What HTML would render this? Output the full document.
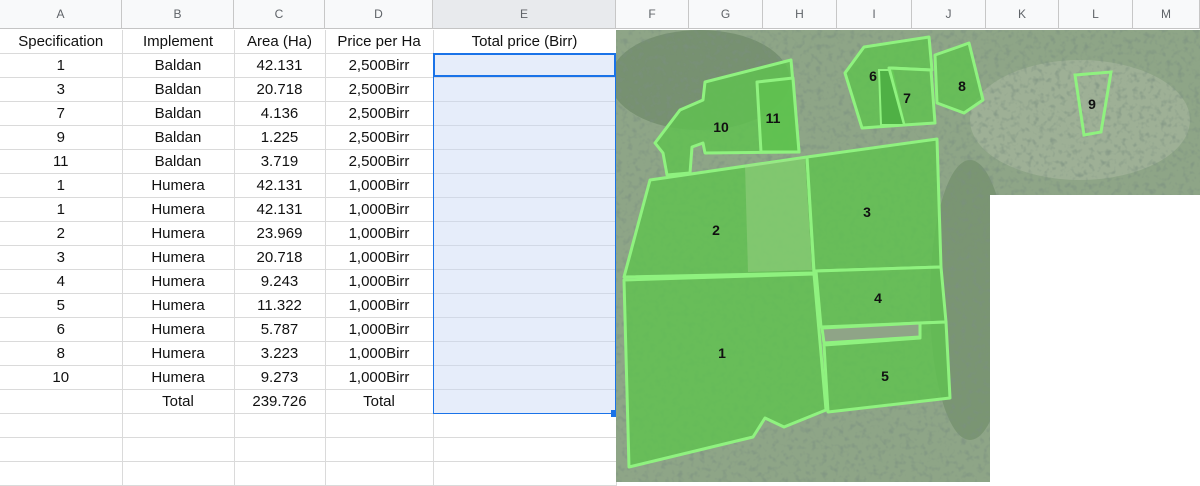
<!DOCTYPE html>
<html><head><style>
body{margin:0;width:1200px;height:486px;overflow:hidden;background:#fff;font-family:"Liberation Sans",Arial,sans-serif;position:relative}
.hdr{position:absolute;top:0;height:29px;border-right:1px solid #c7c7c7;border-bottom:1px solid #c4c4c4;background:#f8f9fa;color:#5f6368;font-size:12px;text-align:center;line-height:29px;box-sizing:border-box}
.grid{position:absolute;left:0;top:30px}
table{border-collapse:collapse;table-layout:fixed}
td{height:23px;border-right:1px solid #dadada;border-bottom:1px solid #dadada;text-align:center;font-size:15px;color:#111;padding:0;line-height:23px;white-space:nowrap;overflow:hidden}
</style></head><body>
<div class="hdr" style="left:0;width:122px">A</div>
<div class="hdr" style="left:122px;width:112px">B</div>
<div class="hdr" style="left:234px;width:91px">C</div>
<div class="hdr" style="left:325px;width:108px">D</div>
<div class="hdr" style="left:433px;width:183px;background:#e8eaed">E</div>
<div class="hdr" style="left:616px;width:73px">F</div>
<div class="hdr" style="left:689px;width:74px">G</div>
<div class="hdr" style="left:763px;width:74px">H</div>
<div class="hdr" style="left:837px;width:75px">I</div>
<div class="hdr" style="left:912px;width:74px">J</div>
<div class="hdr" style="left:986px;width:73px">K</div>
<div class="hdr" style="left:1059px;width:74px">L</div>
<div class="hdr" style="left:1133px;width:67px">M</div>
<div class="grid"><table>
<colgroup><col style="width:122px"><col style="width:112px"><col style="width:91px"><col style="width:108px"><col style="width:183px"></colgroup>
<tr><td>Specification</td><td>Implement</td><td>Area (Ha)</td><td>Price per Ha</td><td>Total price (Birr)</td></tr>
<tr><td>1</td><td>Baldan</td><td>42.131</td><td>2,500Birr</td><td></td></tr>
<tr><td>3</td><td>Baldan</td><td>20.718</td><td>2,500Birr</td><td></td></tr>
<tr><td>7</td><td>Baldan</td><td>4.136</td><td>2,500Birr</td><td></td></tr>
<tr><td>9</td><td>Baldan</td><td>1.225</td><td>2,500Birr</td><td></td></tr>
<tr><td>11</td><td>Baldan</td><td>3.719</td><td>2,500Birr</td><td></td></tr>
<tr><td>1</td><td>Humera</td><td>42.131</td><td>1,000Birr</td><td></td></tr>
<tr><td>1</td><td>Humera</td><td>42.131</td><td>1,000Birr</td><td></td></tr>
<tr><td>2</td><td>Humera</td><td>23.969</td><td>1,000Birr</td><td></td></tr>
<tr><td>3</td><td>Humera</td><td>20.718</td><td>1,000Birr</td><td></td></tr>
<tr><td>4</td><td>Humera</td><td>9.243</td><td>1,000Birr</td><td></td></tr>
<tr><td>5</td><td>Humera</td><td>11.322</td><td>1,000Birr</td><td></td></tr>
<tr><td>6</td><td>Humera</td><td>5.787</td><td>1,000Birr</td><td></td></tr>
<tr><td>8</td><td>Humera</td><td>3.223</td><td>1,000Birr</td><td></td></tr>
<tr><td>10</td><td>Humera</td><td>9.273</td><td>1,000Birr</td><td></td></tr>
<tr><td></td><td>Total</td><td>239.726</td><td>Total</td><td></td></tr>
<tr><td></td><td></td><td></td><td></td><td></td></tr>
<tr><td></td><td></td><td></td><td></td><td></td></tr>
<tr><td></td><td></td><td></td><td></td><td></td></tr>
</table></div>
<div style="position:absolute;left:433px;top:53px;width:183px;height:361px;background:rgba(200,215,245,0.45);border:1px solid #1a73e8;box-sizing:border-box"></div>
<div style="position:absolute;left:433px;top:53px;width:183px;height:24px;border:2px solid #1a73e8;box-sizing:border-box"></div>
<div style="position:absolute;left:611px;top:410px;width:5px;height:7px;background:#1a73e8"></div>
<svg style="position:absolute;left:0;top:0" width="1200" height="486" viewBox="0 0 1200 486">
<defs>
<filter id="n"><feTurbulence type="fractalNoise" baseFrequency="0.18" numOctaves="2" seed="3"/><feColorMatrix values="0 0 0 0 0.2  0 0 0 0 0.28  0 0 0 0 0.22  0 0 0 -3 1.5"/></filter>
<clipPath id="c"><path d="M616 30H1200V195H990V482H616Z"/></clipPath>
</defs>
<g clip-path="url(#c)">
<rect x="616" y="30" width="584" height="452" fill="#8ea587"/>
<ellipse cx="1080" cy="120" rx="110" ry="60" fill="#a9b7a0" opacity=".6"/>
<ellipse cx="700" cy="80" rx="90" ry="50" fill="#5f7d5c" opacity=".5"/>
<ellipse cx="970" cy="300" rx="40" ry="140" fill="#6d8a66" opacity=".6"/>
<rect x="616" y="30" width="584" height="452" filter="url(#n)" opacity=".6"/>
</g>
<g fill="#5fc24f" fill-opacity=".82" stroke="#8ff27f" stroke-width="3" stroke-linejoin="round">
<path d="M624 280L814 274L826 410L784 427L765 418L753 437L629 467Z"/>
<path d="M624 277L650 180L807 157L814 273Z"/>
<path d="M807 157L937 139L941 267L814 271Z"/>
<path d="M816 271L941 267L946 322L821 327Z"/>
<path d="M824 345L920 338L920 323L946 322L950 398L828 412Z"/>
<path d="M655 143L680 110L703 100L705 82L791 60L799 152L705 153L703 143L692 147L690 173L667 175L663 153Z"/>
<path d="M757 82L793 78L799 152L761 152Z"/>
<path d="M845 73L864 47L929 37L932 70L891 68L904 125L862 128Z"/>
<path d="M889 68L931 70L935 123L904 125Z"/>
<path d="M935 55L958 47L969 43L983 100L964 113L937 103Z"/>
</g>
<path d="M822 328L920 323L920 337L824 343Z" fill="#8fa487" stroke="#8ff27f" stroke-width="3"/>
<path d="M879 70L889 70L904 125L881 125Z" fill="#4fb045" stroke="#8ff27f" stroke-width="2"/>
<path d="M1075 75L1111 72L1101 132L1084 135Z" fill="none" stroke="#8ff27f" stroke-width="3"/>
<path d="M745 165L805 158L812 270L748 272Z" fill="#a8d890" opacity=".4"/>
<g font-family="Liberation Sans,Arial,sans-serif" font-weight="bold" font-size="14" fill="#111" text-anchor="middle">
<text x="721" y="132">10</text><text x="773" y="123">11</text><text x="873" y="81">6</text>
<text x="907" y="103">7</text><text x="962" y="91">8</text><text x="1092" y="109">9</text>
<text x="716" y="235">2</text><text x="867" y="217">3</text><text x="878" y="303">4</text>
<text x="722" y="358">1</text><text x="885" y="381">5</text>
</g>
</svg>
</body></html>
